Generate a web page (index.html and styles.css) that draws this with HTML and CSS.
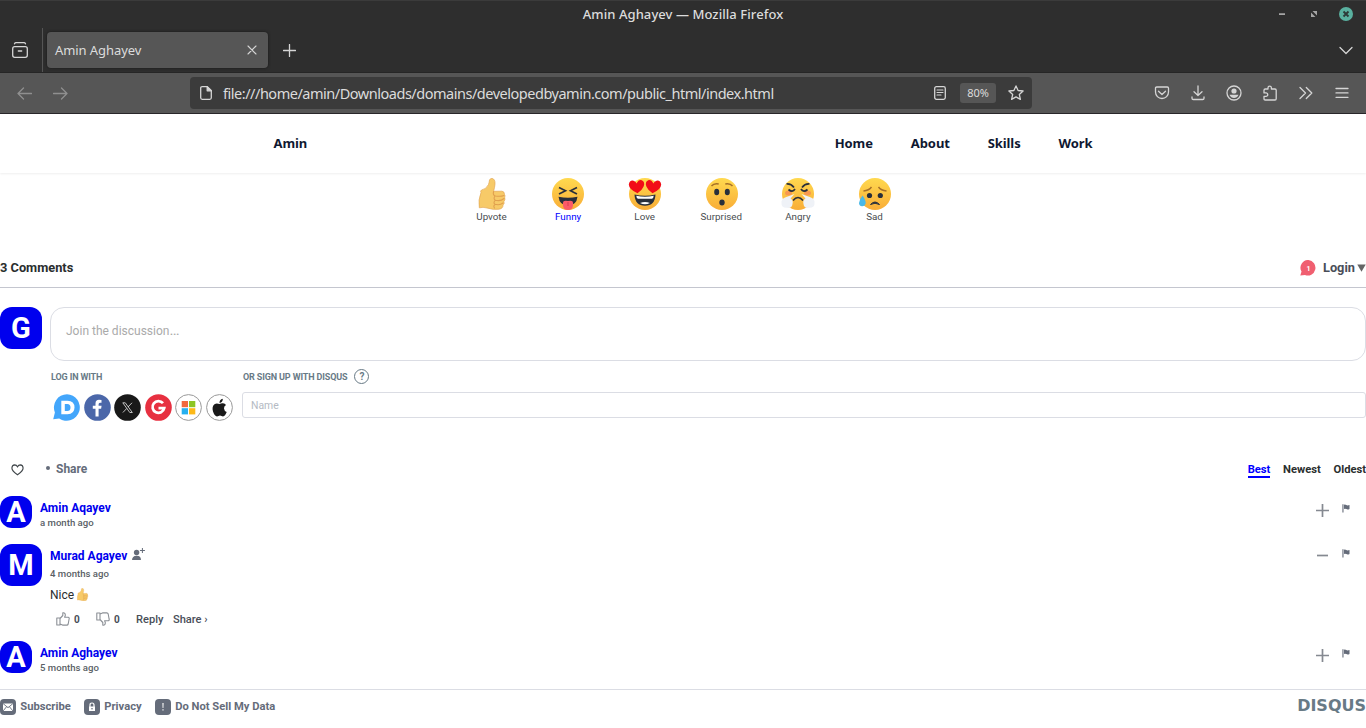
FILE: index.html
```html
<!DOCTYPE html>
<html lang="en">
<head>
<meta charset="utf-8">
<title>Amin Aghayev</title>
<link rel="stylesheet" href="styles.css">
</head>
<body>
<svg class="defs" width="0" height="0">
  <defs>
    <linearGradient id="face" x1="0" y1="0" x2="0" y2="1"><stop offset="0" stop-color="#ffd94f"/><stop offset="1" stop-color="#f9ad37"/></linearGradient>
    <symbol id="thumb" viewBox="0 0 32 32"><path fill="#f7ca68" stroke="#e2a756" stroke-width=".7" d="M3 14.5Q2 13 3.500 12Q8 11.500 10.500 6.500Q11.300 4 11.500 2Q12 .4 14 .4Q17.300 1 17 6Q16.800 9 15.600 13.300L24 13.200Q26.600 13.600 26.400 16.200Q27.400 17.400 26.700 19.500Q27.500 21.500 25.900 23.500Q26.800 25.500 25 27Q25.200 30.500 21 31.200Q15 32 9 30Q5 28.800 1.300 29.800Q0 22 3 14.500Z"/><path fill="none" stroke="#e0a04e" stroke-width="1.100" stroke-linecap="round" d="M26 17.500Q23 18.800 17.500 18Q14.500 17.300 15.600 13.500M26 20.500Q23 23.500 17.500 22.300Q15 21 17 18M25 25Q22 27.500 17 26.300Q15 25 17 22.500M16.500 30Q15 28 17 26.500"/></symbol>
    <symbol id="flag" viewBox="0 0 8 9"><path fill="#656c7a" d="M.4.300H1.500V8.500H.4ZM2 .8Q3.200.2 4.300 1.100Q5.500 1.900 7.500 1V5Q5.700 6 4.300 5.100Q3 4.300 2 5Z"/></symbol>
    <symbol id="vote" viewBox="0 0 14 14"><path fill="none" stroke="#8c9096" stroke-width="1.100" stroke-linejoin="round" d="M.8 6H4V13H.8ZM4 6.500L6.800 3.500V.8Q9.500.4 9.300 3.500L8.600 5.200H12.300Q13.700 5.700 13 7.500L12.200 12Q11.900 13.100 10.800 13.100H6.500L4 12"/></symbol>
  </defs>
</svg>

<header class="titlebar">
  <span class="window-title">Amin Aghayev — Mozilla Firefox</span>
  <div class="window-controls">
    <svg width="84" height="28" viewBox="0 0 84 28"><path fill="#a5a5a5" d="M5 12.300h6v1.800H5zM38.500 10H43v4.500ZM37 11.500V16h4.500Z"/><circle cx="72" cy="13" r="7" fill="#59b09f"/><path d="M69.500 10.500l5 5m0-5l-5 5" stroke="#2d3a38" stroke-width="1.900"/></svg>
  </div>
</header>

<div class="tabbar">
  <div class="recent"><svg class="line" width="18" height="18" viewBox="0 0 18 18"><rect x="1.700" y="5.700" width="14.600" height="10.600" rx="2"/><path d="M3.500 2.800Q4 1.700 5 1.700h8q1 0 1.500 1.100M7.300 10h3.400"/></svg></div>
  <div class="tab"><span class="tab-title">Amin Aghayev</span><svg class="line thin" width="10" height="10" viewBox="0 0 10 10"><path d="M1 1l8 8M9 1L1 9"/></svg></div>
  <svg class="line newtab" width="13" height="13" viewBox="0 0 13 13"><path d="M6.500.5v12M.5 6.500h12"/></svg>
  <svg class="line alltabs" width="14" height="9" viewBox="0 0 14 9"><path d="M1 1.500l6 6 6-6"/></svg>
</div>

<div class="toolbar">
  <div class="history">
    <svg class="line" width="15" height="13" viewBox="0 0 15 13"><path d="M14.500 6.500H1M6.500 1L1 6.500 6.500 12"/></svg>
    <svg class="line" width="15" height="13" viewBox="0 0 15 13"><path d="M.5 6.500H14M8.500 1L14 6.500 8.500 12"/></svg>
  </div>
  <div class="urlbar">
    <svg class="line" width="12" height="14" viewBox="0 0 12 14"><path d="M7.200.7H2.200Q.7.700.7 2.200v9.600q0 1.500 1.500 1.500h7.600q1.500 0 1.500-1.500V4.800Z"/><path d="M7.200.7v4.100h4.100Z" fill="#d5d5d5"/></svg>
    <span class="url">file:///home/amin/Downloads/domains/developedbyamin.com/public_html/index.html</span>
    <svg class="line reader" width="12" height="14" viewBox="0 0 12 14"><rect x=".7" y=".7" width="10.600" height="12.600" rx="1.700"/><path d="M3 4h6M3 6.500h6M3 9h4" stroke-width="1.100"/></svg>
    <span class="zoom">80%</span>
    <svg class="line" width="16" height="16" viewBox="0 0 16 16"><path d="M8 .9l2.100 4.600 5 .5-3.800 3.400 1.100 5L8 11.900l-4.400 2.500 1.100-5L.9 6l5-.5Z"/></svg>
  </div>
  <div class="tools">
    <svg class="line" width="16" height="16" viewBox="0 0 16 16"><path d="M2.700 2h10.600Q14.500 2 14.500 3.200V7a6.500 6.500 0 0 1-13 0V3.200Q1.500 2 2.700 2ZM4.500 6.200L8 9.500l3.500-3.300"/></svg>
    <svg class="line" width="16" height="16" viewBox="0 0 16 16"><path d="M8 1v9M4 6.800L8 10.500l4-3.700M2 12v1.200Q2 14.500 3.300 14.500h9.400q1.300 0 1.300-1.300V12"/></svg>
    <svg class="line" width="16" height="16" viewBox="0 0 16 16"><circle cx="8" cy="8" r="7"/><circle cx="8" cy="6" r="2.600" class="solid"/><path class="solid" d="M3.500 9.700h9Q11 13 8 13T3.500 9.700Z"/></svg>
    <svg class="line" width="16" height="16" viewBox="0 0 16 16"><path d="M2 5.200Q2 4 3.200 4H6V2.800a1.700 1.700 0 0 1 3.400 0V4H13q1.200 0 1.200 1.200v8.600q0 1.200-1.200 1.200H3.200Q2 15 2 13.800V11.400H4a1.700 1.700 0 0 0 0-3.500H2Z"/></svg>
    <svg class="line" width="16" height="16" viewBox="0 0 16 16"><path d="M2 2.500L7.500 8 2 13.500M8.300 2.500L13.800 8 8.300 13.500"/></svg>
    <svg class="line" width="16" height="16" viewBox="0 0 16 16"><path d="M2 3.500h12M2 7.900h12M2 12.300h12"/></svg>
  </div>
</div>

<nav class="nav">
  <div class="nav-inner">
    <span class="brand">Amin</span>
    <div class="links"><span>Home</span><span>About</span><span>Skills</span><span>Work</span></div>
  </div>
</nav>

<main>
  <section class="reactions">
    <div class="reaction"><svg width="32" height="32"><use href="#thumb" x="2" width="32" height="32"/></svg><span>Upvote</span></div>
    <div class="reaction active"><svg width="32" height="32" viewBox="0 0 32 32"><circle cx="16" cy="16" r="16" fill="url(#face)"/><path d="M7 9.500l6.500 3.300L7 16M25 9.500l-6.500 3.300L25 16" fill="none" stroke="#292f3b" stroke-width="1.700"/><path d="M6.500 18.700Q16 21 25.500 18.700Q24.500 27.500 16 27.500T6.500 18.700Z" fill="#292f3b"/><path d="M11 25Q11 21.800 16 23Q21 21.800 21 25v2.500Q20.500 32 16 32T11 27.500Z" fill="#fb5b68"/><path d="M16 24v4" stroke="#d93e50"/></svg><span>Funny</span></div>
    <div class="reaction"><svg width="34" height="32" viewBox="0 0 34 32"><circle cx="17" cy="16" r="16" fill="url(#face)"/><path d="M9.500 15.200Q1 11.500.8 6.500Q1.500 2 5.500 2.700Q7.800 3.300 8.600 5.500Q10.500 1.500 13.700 2.200Q17.500 4 15.500 8.800Q14 12.500 9.500 15.200ZM24.500 15.200Q33 11.500 33.200 6.500Q32.500 2 28.500 2.700Q26.200 3.300 25.400 5.500Q23.500 1.500 20.300 2.200Q16.500 4 18.500 8.800Q20 12.500 24.500 15.200Z" fill="#f20d17"/><path d="M6.500 16.500Q17 19 27.500 16.500Q27 27.800 17 27.800T6.500 16.500Z" fill="#292f3b"/><path d="M8.300 17.800Q17 19.500 25.700 17.800Q25.500 20.500 24 20.700H10Q8.500 20.500 8.300 17.800ZM12 25Q17 23 22 25Q17 27.500 12 25Z" fill="#fff"/></svg><span>Love</span></div>
    <div class="reaction sad"><svg width="32" height="32" viewBox="0 0 32 32"><circle cx="16" cy="16" r="16" fill="url(#face)"/><ellipse cx="10.700" cy="14" rx="2.500" ry="3.300" fill="#292f3b"/><ellipse cx="21.300" cy="14" rx="2.500" ry="3.300" fill="#292f3b"/><ellipse cx="16" cy="24.500" rx="2.700" ry="3" fill="#292f3b"/><path d="M5.500 8Q8 5 12.700 6M26.500 8Q24 5 19.300 6" fill="none" stroke="#a56f28" stroke-width="1.400"/></svg><span>Surprised</span></div>
    <div class="reaction"><svg width="34" height="32" viewBox="0 0 34 32"><circle cx="17" cy="16" r="16" fill="url(#face)"/><ellipse cx="7.500" cy="15" rx="3.500" ry="2.500" fill="#f79850"/><ellipse cx="26.500" cy="15" rx="3.500" ry="2.500" fill="#f79850"/><path d="M5.500 6Q10 5.500 13 9.500M28.500 6Q24 5.500 21 9.500M7.500 11.500Q11.500 15 14 11M26.500 11.500Q22.500 15 20 11M12 22.500Q17 16.500 22 22.500" fill="none" stroke="#292f3b" stroke-width="1.700"/><path d="M13.500 16L9.500 20.500Q12.500 22 11.500 26Q11 30.500 6 29.800Q0 30 .5 25Q0 21 4 19.500ZM20.500 16L24.500 20.500Q21.500 22 22.500 26Q23 30.500 28 29.800Q34 30 33.500 25Q34 21 30 19.500Z" fill="#eff2f7"/></svg><span>Angry</span></div>
    <div class="reaction sad"><svg width="32" height="32" viewBox="0 0 32 32"><circle cx="16" cy="16" r="16" fill="url(#face)"/><circle cx="10.500" cy="17.500" r="2.600" fill="#292f3b"/><circle cx="21.300" cy="17.500" r="2.600" fill="#292f3b"/><path d="M11.500 26.500Q16 21.500 20.500 26.500Q16 24 11.500 26.500Z" fill="#292f3b" stroke="#292f3b"/><path d="M4.500 13Q10 12.500 12.500 9M27.500 13Q22 12.500 19.500 9" fill="none" stroke="#a56f28" stroke-width="1.400"/><path d="M3.500 17.500Q7.500 23 6.500 26Q5.500 28.500 3 28.300Q0 28 0 25Q.3 21.500 3.500 17.500Z" fill="#4ab9e8"/></svg><span>Sad</span></div>
  </section>

  <section class="thread-head">
    <span class="count">3 Comments</span>
    <div class="login"><svg width="16" height="16" viewBox="0 0 16 16"><path fill="#f05f70" d="M8.500 0A7.600 7.800 0 1 1 5 15L.3 15.500 1.500 11.500A7.700 7.700 0 0 1 8.500 0Z"/><text x="8.500" y="11.200" text-anchor="middle" class="badge-text">1</text></svg><span>Login</span><svg width="9" height="8" viewBox="0 0 9 8"><path d="M.3.500h8.400L4.500 7.800Z" fill="#656565"/></svg></div>
  </section>

  <section class="composer"><div class="avatar large">G</div><div class="textbox">Join the discussion<span class="ellipsis">…</span></div></section>

  <section class="auth">
    <div class="auth-login">
      <div class="auth-label">LOG IN WITH</div>
      <div class="socials">
        <svg width="27" height="27" viewBox="0 0 27 27"><path fill="#43a6fb" d="M14 .2A13.200 13.300 0 1 1 6.200 24.500L.2 25.200 1.900 18.500A13.300 13.300 0 0 1 14 .2Z"/><path fill="#fff" fill-rule="evenodd" d="M8.300 6.700H14.500Q21.500 7 21.500 13.400T14.500 20.300H8.300ZM11.800 9.900V17.100H14.300Q17.500 17 17.500 13.500T14.300 9.900Z"/></svg>
        <svg width="27" height="27" viewBox="0 0 27 27"><circle cx="13.500" cy="13.500" r="13.300" fill="#4b67a9"/><path fill="#fff" d="M11.500 22.500V14.800H8.800v-3h2.700V9.500Q11.500 5.800 15 5.800q1.500 0 2.500.2v2.700h-1.500q-1.400 0-1.400 1.500v1.600h3l-.5 3h-2.500v7.700Z"/></svg>
        <svg width="27" height="27" viewBox="0 0 27 27"><circle cx="13.500" cy="13.500" r="13.300" fill="#191919"/><path fill="none" stroke="#e7e7e7" stroke-width=".8" d="M8.800 8.800h2.500l7 9.700h-2.500ZM18 8.800L14 13M12.800 14.400L8.900 18.500"/></svg>
        <svg width="27" height="27" viewBox="0 0 27 27"><circle cx="13.500" cy="13.500" r="13.300" fill="#e73040"/><path fill="none" stroke="#fff" stroke-width="2.700" d="M18 9.200A5.900 5.900 0 1 0 19.200 14.200H13.500"/></svg>
        <svg width="27" height="27" viewBox="0 0 27 27"><circle cx="13.500" cy="13.500" r="12.900" fill="#fff" stroke="#999"/><path fill="#f1683d" d="M6.700 7h6.300v6.200H6.700z"/><path fill="#8cc523" d="M14 7h6.300v6.200H14z"/><path fill="#27b0ef" d="M6.700 14.200h6.300v6.200H6.700z"/><path fill="#fdb918" d="M14 14.200h6.300v6.200H14z"/></svg>
        <svg width="27" height="27" viewBox="0 0 27 27"><circle cx="13.500" cy="13.500" r="12.900" fill="#fff" stroke="#999"/><path fill="#191919" d="M16.800 4.700Q17 8.300 13.500 9Q13.300 5.500 16.800 4.700ZM13.500 10Q15 9 17 9.200Q19 9.400 20 11Q17.800 12.300 18 14.500Q18.200 17 20.700 18Q19.200 22 17 22.500Q15.500 22.200 14 21.600Q12.500 22.200 11 22.500Q8.500 22 7 17.500Q5.600 12.500 8.500 10.200Q10.500 8.700 13.500 10Z"/></svg>
      </div>
    </div>
    <div class="auth-signup">
      <div class="auth-label"><span class="signup-label">OR SIGN UP WITH DISQUS</span> <span class="help">?</span></div>
      <div class="name-input">Name</div>
    </div>
  </section>

  <section class="sortbar">
    <svg class="heart" width="13" height="12" viewBox="0 0 13 12"><path d="M6.500 10.800Q.8 7 .9 4.100Q1 1 3.700.9Q5.500.9 6.500 2.800Q7.500.9 9.300.9Q12 1 12.100 4.100Q12.200 7 6.500 10.800Z" fill="none" stroke="#3f4549" stroke-width="1.100"/></svg>
    <i class="dot"></i><span class="share">Share</span>
    <div class="sorts"><span class="selected">Best</span><span>Newest</span><span>Oldest</span></div>
  </section>

  <section class="comment first">
    <div class="avatar small">A</div>
    <div class="body"><div class="author">Amin Aqayev</div><div class="time">a month ago</div></div>
    <div class="controls"><svg width="13" height="13" viewBox="0 0 13 13"><path d="M6.500 0v13M0 6.500h13"/></svg><svg class="flag" width="8" height="9"><use href="#flag" width="8" height="9"/></svg></div>
  </section>
  <section class="comment open">
    <div class="avatar large">M</div>
    <div class="body"><div class="author">Murad Agayev <svg width="13" height="13" viewBox="0 0 13 13"><g fill="#656c7a"><circle cx="4.600" cy="4.500" r="2.700"/><path d="M0 12Q.2 8 4.500 7.800T9 12ZM9.900 0h1v2h2v1h-2v2h-1V3h-2V2h2Z"/></g></svg></div><div class="time">4 months ago</div>
      <p class="message">Nice <svg width="13" height="13" viewBox="0 0 28 32"><use href="#thumb" width="32" height="32"/></svg></p>
      <div class="actions"><svg width="14" height="14"><use href="#vote"/></svg><b>0</b><svg class="down" width="14" height="14"><use href="#vote"/></svg><b>0</b><span class="reply">Reply</span><span>Share ›</span></div>
    </div>
    <div class="controls"><svg width="13" height="13" viewBox="0 0 13 13"><path d="M1 6.500h11"/></svg><svg class="flag" width="8" height="9"><use href="#flag" width="8" height="9"/></svg></div>
  </section>
  <section class="comment last">
    <div class="avatar small">A</div>
    <div class="body"><div class="author">Amin Aghayev</div><div class="time">5 months ago</div></div>
    <div class="controls"><svg width="13" height="13" viewBox="0 0 13 13"><path d="M6.500 0v13M0 6.500h13"/></svg><svg class="flag" width="8" height="9"><use href="#flag" width="8" height="9"/></svg></div>
  </section>
</main>

<footer class="footer">
  <span class="foot subscribe"><svg width="16" height="16" viewBox="0 0 16 16"><rect width="16" height="16" rx="4" fill="#656c7a"/><rect x="3" y="4.500" width="10" height="7.500" fill="#fff"/><path d="M3 4.500l5 4.200 5-4.200M3 12l3.700-4.400M13 12L9.300 7.600" fill="none" stroke="#656c7a" stroke-width=".9"/></svg><span>Subscribe</span></span>
  <span class="foot privacy"><svg width="16" height="16" viewBox="0 0 16 16"><rect width="16" height="16" rx="4" fill="#656c7a"/><path d="M5 7.500h6V12H5z" fill="#fff"/><path d="M6 8V6q0-2 2-2t2 2v2" fill="none" stroke="#fff" stroke-width="1.200"/><circle cx="8" cy="9.700" r=".8" fill="#656c7a"/></svg><span>Privacy</span></span>
  <span class="foot data"><svg width="16" height="16" viewBox="0 0 16 16"><rect width="16" height="16" rx="4" fill="#656c7a"/><path d="M7.400 4h1.200l-.2 5h-.8zM7.400 10.300h1.200v1.300H7.400z" fill="#fff"/></svg><span>Do Not Sell My Data</span></span>
  <span class="disqus">DISQUS</span>
</footer>
</body>
</html>
```
FILE: styles.css
```css
* { box-sizing: border-box; }
body { margin: 0; width: 1366px; height: 728px; overflow: hidden; background: #fff; font-family: Roboto, sans-serif; color: #2a2e2e; }
svg { display: block; flex: none; }
.defs { position: absolute; }
.titlebar, .tabbar, .toolbar { display: flex; align-items: center; font-family: "Noto Sans", sans-serif; color: #dcdcdc; white-space: nowrap; }
.line { fill: none; stroke: #d5d5d5; stroke-width: 1.3; stroke-linecap: round; stroke-linejoin: round; }
.thin { stroke-width: 1.1; }
.solid { fill: #d5d5d5; stroke: none; }

.titlebar { height: 28px; background: #2e2e2e; border-top: 1px solid #3b3b3b; display: grid; grid-template-columns: 1fr auto 1fr; }
.window-title { grid-column: 2; font-size: 13px; font-weight: 500; line-height: 24px; letter-spacing: .07px; padding-bottom: 2px; }
.window-controls { justify-self: end; padding-right: 8px; }
.tabbar { height: 45px; background: #2e2e2e; border-bottom: 1px solid #262626; }
.recent { width: 43px; height: 44px; padding: 13px 0 0 11px; border-right: 1px solid #555; }
.tab { width: 221px; height: 36px; margin-left: 4px; padding: 0 11px 0 8px; border-radius: 4px; background: #565656; box-shadow: 0 0 3px #171717; display: flex; align-items: center; justify-content: space-between; }
.tab-title { font-size: 13px; letter-spacing: -.08px; }
.newtab { margin-left: 15px; }
.alltabs { margin-left: auto; margin-right: 13px; }
.toolbar { height: 41px; background: #565656; border-bottom: 1px solid #29272b; }
.history { display: flex; gap: 21px; width: 190px; padding-left: 17px; opacity: .45; }
.urlbar { width: 842px; height: 32px; padding: 0 8px 0 10px; border-radius: 4px; background: #3b3b3b; display: flex; align-items: center; }
.url { margin-left: 11px; font-size: 14.5px; letter-spacing: -.48px; }
.reader { margin-left: auto; }
.zoom { width: 36px; height: 20px; margin: 0 12px 0 14px; border-radius: 3px; background: #565656; font-size: 11px; line-height: 20px; text-align: center; }
.tools { margin-left: auto; margin-right: 16px; display: flex; gap: 20px; }

.nav { height: 59px; box-shadow: 0 1px 2px #0001; }
.nav-inner { width: 819px; margin: 0 auto; height: 57px; display: flex; align-items: center; justify-content: space-between; font: 700 13px "Noto Sans", sans-serif; letter-spacing: -.1px; color: #0f1831; }
.links { display: flex; gap: 38px; }

.reactions { height: 75px; padding-top: 5px; display: grid; grid-template-columns: repeat(6, 76.6px); justify-content: center; }
.reaction { display: flex; flex-direction: column; align-items: center; font-size: 9.8px; line-height: 14px; color: #494d50; }
.sad svg { margin-left: 1px; }
.active { color: #00f; }
.thread-head { height: 40px; border-bottom: 1px solid #c4c6cf; display: flex; align-items: center; justify-content: space-between; font-size: 12.8px; font-weight: 700; }
.login { display: flex; align-items: center; color: #494e58; }
.login span { margin: 0 2px 0 7px; }
.badge-text { font: 700 7px Roboto, sans-serif; fill: #fff; }
.avatar { flex: none; background: #00e; color: #fff; font-weight: 700; text-align: center; }
.large { width: 42px; height: 42px; border-radius: 12px; font-size: 29px; line-height: 42px; }
.small { width: 32px; height: 32px; border-radius: 12px; font-size: 29px; line-height: 32px; }
.composer { margin-top: 19px; height: 54px; display: flex; gap: 8px; }
.textbox { flex: 1; border: 1px solid #dbdde4; border-radius: 14px; padding: 14px 15px; font-size: 12px; line-height: 18px; color: #aaa; }
.ellipsis { font-size: 15px; line-height: 1; }
.auth { height: 89px; display: flex; }
.auth-login { width: 242px; padding-left: 51px; }
.auth-signup { flex: 1; }
.auth-label { height: 31px; display: flex; align-items: center; font-size: 9px; font-weight: 700; letter-spacing: -.13px; color: #687a86; }
.signup-label { padding-left: 1px; }
.help { width: 15px; height: 15px; margin: -1px 0 0 7px; border: 1px solid #687a86; border-radius: 50%; font-size: 10px; line-height: 13px; text-align: center; }
.socials { display: flex; gap: 3.6px; padding: 2px 0 0 2px; }
.name-input { height: 26px; border: 1px solid #dbdde4; border-radius: 3px; padding: 0 8px; font-size: 10.4px; line-height: 25px; color: #b4bac3; }
.sortbar { height: 38px; display: flex; align-items: center; padding-left: 11px; color: #656c7a; font-size: 12px; font-weight: 700; }
.heart { margin-top: 2px; }
.dot { width: 4px; height: 4px; margin: -2px 6px 0 22px; border-radius: 50%; background: #656c7a; }
.sorts { margin-left: auto; display: flex; gap: 12.7px; padding-top: 2px; font-size: 11.2px; font-weight: 700; line-height: 15px; color: #2a2e2e; }
.sorts span { border-bottom: 2px solid transparent; height: 16px; }
.sorts .selected { color: #00f; border-color: #00f; }
.comment { display: flex; gap: 8px; }
.first { margin-top: 8px; height: 48px; }
.open { height: 97px; }
.last { height: 48px; }
.body { flex: 1; }
.author { display: flex; align-items: center; gap: 5px; height: 24px; font-size: 12px; font-weight: 700; color: #00e; }
.author svg { margin-top: -4px; }
.time { height: 12px; margin-top: -3px; font-size: 9.6px; font-weight: 500; line-height: 12px; color: #5a5f66; }
.open .time { margin-top: 0; }
.message { margin: 7px 0 0; display: flex; gap: 2px; font-size: 12px; line-height: 16px; }
.message svg { margin-top: 1px; }
.actions { display: flex; align-items: center; height: 16px; margin-top: 8px; padding-left: 6px; font-size: 11.1px; font-weight: 500; color: #494e58; }
.actions b { width: 20px; margin-left: 4px; margin-right: 2px; font-size: 10px; }
.down { transform: rotate(180deg) scaleX(-1); }
.reply { margin-right: 9.5px; }
.controls { display: flex; gap: 12.5px; padding: 8px 16.5px 0 0; }
.controls svg:first-child { fill: none; stroke: #858991; stroke-width: 1.7; }
.open .controls { padding-top: 5px; }
.footer { height: 34px; border-top: 1px solid #dbdde4; display: flex; align-items: center; font-size: 11.2px; font-weight: 700; color: #656c7a; }
.foot { display: flex; align-items: center; gap: 4.3px; margin-right: 13.3px; }
.disqus { margin-left: auto; font: 700 16px/20px "DejaVu Sans", sans-serif; padding-bottom: 1px; color: #687a86; }
```
